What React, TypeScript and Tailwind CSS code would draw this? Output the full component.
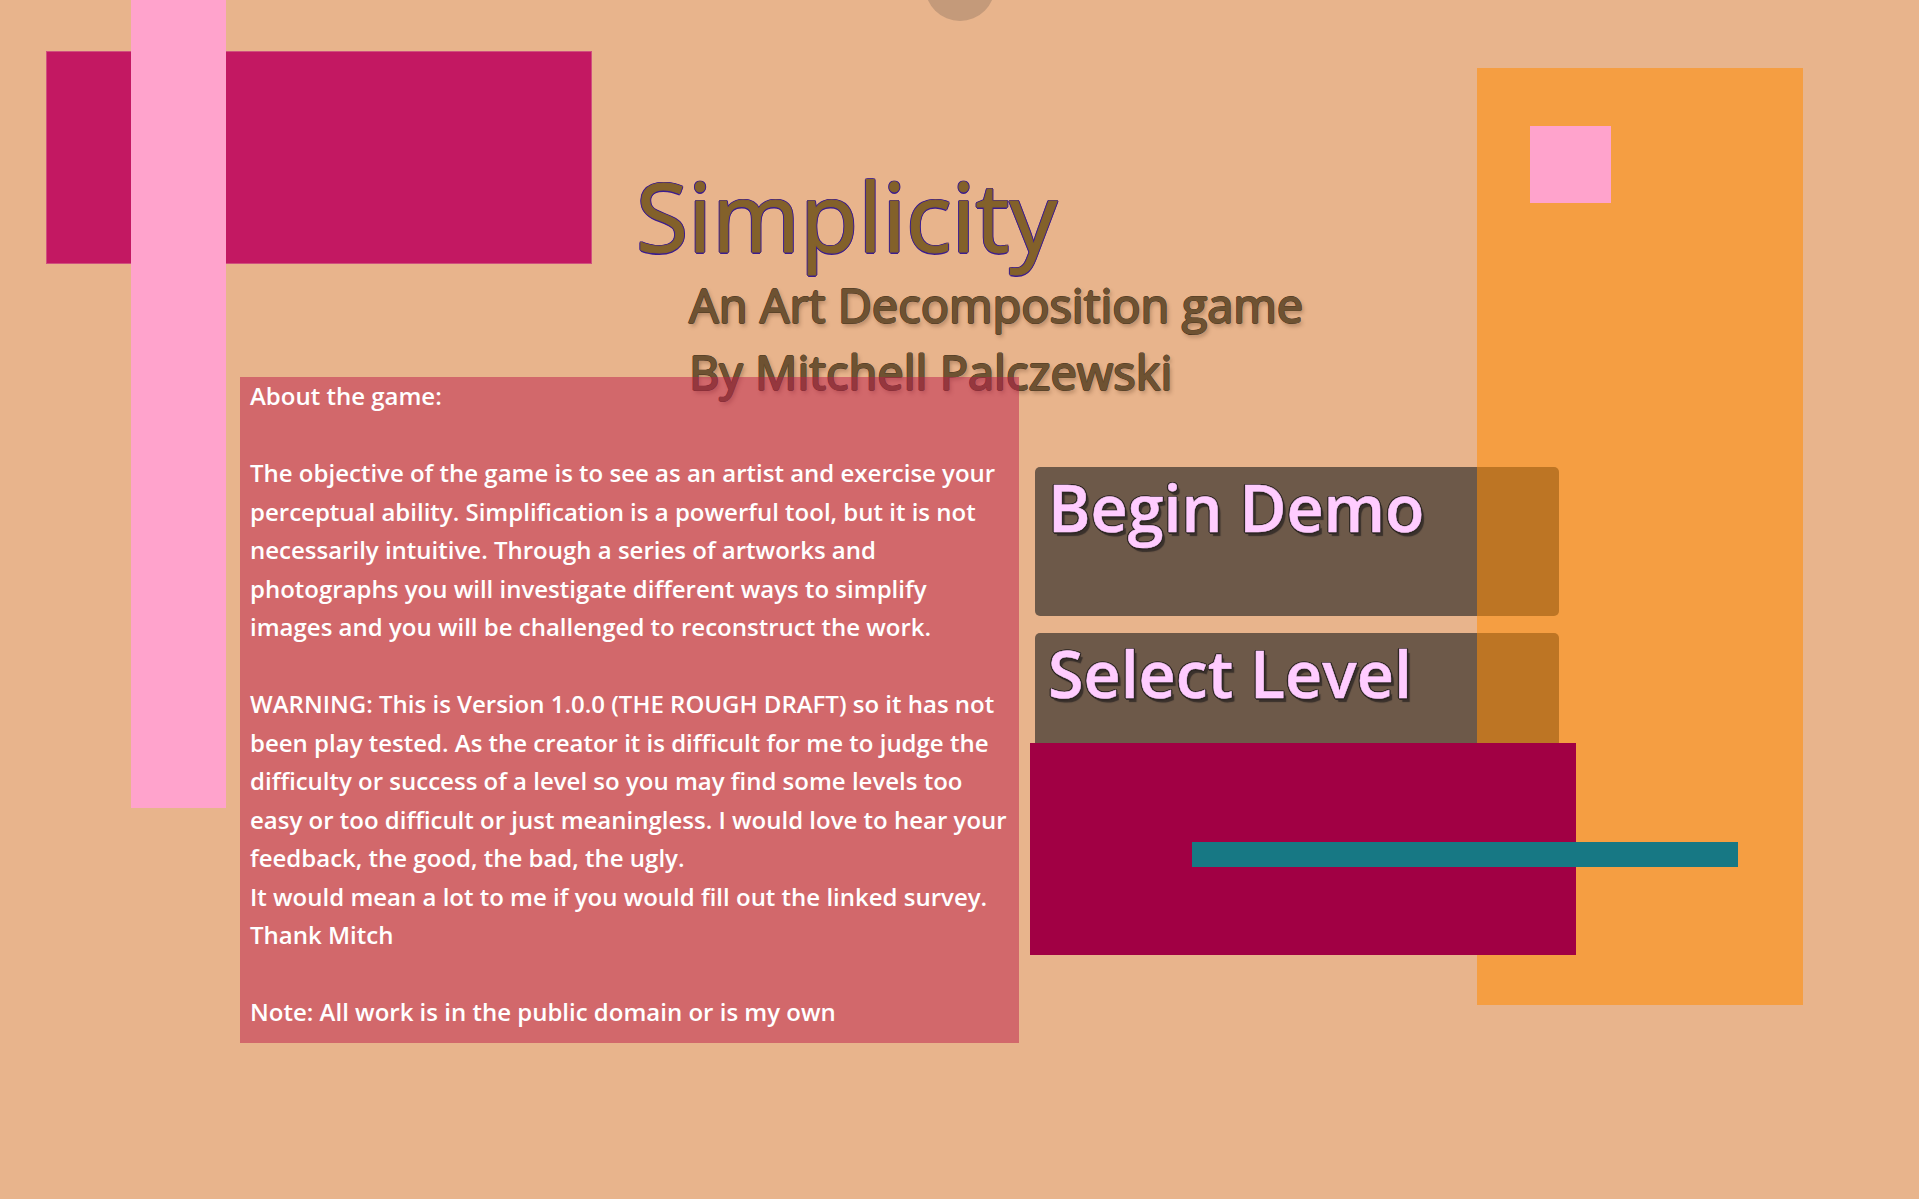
import React from "react";

const aboutLines = [
  "About the game:",
  "",
  "The objective of the game is to see as an artist and exercise your",
  "perceptual ability. Simplification is a powerful tool, but it is not",
  "necessarily intuitive. Through a series of artworks and",
  "photographs you will investigate different ways to simplify",
  "images and you will be challenged to reconstruct the work.",
  "",
  "WARNING: This is Version 1.0.0 (THE ROUGH DRAFT) so it has not",
  "been play tested. As the creator it is difficult for me to judge the",
  "difficulty or success of a level so you may find some levels too",
  "easy or too difficult or just meaningless. I would love to hear your",
  "feedback, the good, the bad, the ugly.",
  "It would mean a lot to me if you would fill out the linked survey.",
  "Thank Mitch",
  "",
  "Note: All work is in the public domain or is my own",
];

const MenuButton = ({ text }: { text: string }) => (
  <button className="w-[524px] h-[149px] rounded-[5px] bg-[#6d5949] text-left pl-[13px] pt-[8px] flex items-start cursor-pointer">
    <span className="text-[64.5px] leading-none font-semibold text-[#ffccff] [-webkit-text-stroke:0.5px_#ffccff] [text-shadow:1.5px_0_0_#2e2724,-1.5px_0_0_#2e2724,0_1.5px_0_#2e2724,0_-1.5px_0_#2e2724,1px_1px_0_#2e2724,-1px_-1px_0_#2e2724,1px_-1px_0_#2e2724,-1px_1px_0_#2e2724,3px_4px_1px_#3a312c]">
      {text}
    </span>
  </button>
);

export default function App() {
  return (
    <div className="relative w-full h-[1199px] overflow-hidden bg-[#e8b48c] font-['Open_Sans',sans-serif]">
      {/* art canvas shapes behind the menu */}
      <div className="absolute left-[925px] top-[-49px] w-[70px] h-[70px] rounded-full bg-[#c49a7a]" />
      <div className="absolute left-[46px] top-[51px] w-[546px] h-[213px] bg-[#c31862] border border-[#d0507e]" />
      <div className="absolute left-[131px] top-0 w-[95px] h-[808px] bg-[#ffa3cc]" />

      {/* menu content */}
      <div className="relative z-10">
        <div className="pt-[166px] pl-[636px]">
          <h1 className="text-[95px] leading-[98px] font-normal text-[#83612a] [-webkit-text-stroke:1px_#83612a] [text-shadow:1.5px_0_0_#3b1d8e,-1.5px_0_0_#3b1d8e,0_1.5px_0_#3b1d8e,0_-1.5px_0_#3b1d8e,1px_1px_0_#3b1d8e,-1px_-1px_0_#3b1d8e,1px_-1px_0_#3b1d8e,-1px_1px_0_#3b1d8e]">
            Simplicity
          </h1>
          <div className="mt-[8px] pl-[53px] text-[47px] leading-[67px] font-normal text-[#6e5232] [-webkit-text-stroke:1.2px_#6e5232] [text-shadow:1px_0_0_#45321f,-1px_0_0_#45321f,0_1px_0_#45321f,0_-1px_0_#45321f,2px_3px_4px_rgba(60,30,10,0.35)]">
            <div>An Art Decomposition game</div>
            <div>By Mitchell Palczewski</div>
          </div>
        </div>

        <div className="flex flex-row mt-[-29px] pl-[240px]">
          <div className="w-[779px] h-[666px] bg-[#bc1c4a]/50 pl-[10px] text-white text-[24px] leading-[38.5px] font-semibold">
            {aboutLines.map((line, i) => (
              <div key={i} className="whitespace-pre h-[38.5px]">
                {line}
              </div>
            ))}
          </div>
          <div className="flex flex-col gap-[17px] ml-[16px] mt-[90px]">
            <MenuButton text="Begin Demo" />
            <MenuButton text="Select Level" />
          </div>
        </div>
      </div>

      {/* art canvas shapes over the menu */}
      <div className="absolute z-20 left-[1477px] top-[68px] w-[326px] h-[937px] bg-[#ff8c05]/55" />
      <div className="absolute z-20 left-[1530px] top-[126px] w-[81px] h-[77px] bg-[#ffa3cc]" />
      <div className="absolute z-30 left-[1030px] top-[743px] w-[546px] h-[212px] bg-[#a10044]" />
      <div className="absolute z-40 left-[1192px] top-[842px] w-[546px] h-[25px] bg-[#177884]" />
    </div>
  );
}
